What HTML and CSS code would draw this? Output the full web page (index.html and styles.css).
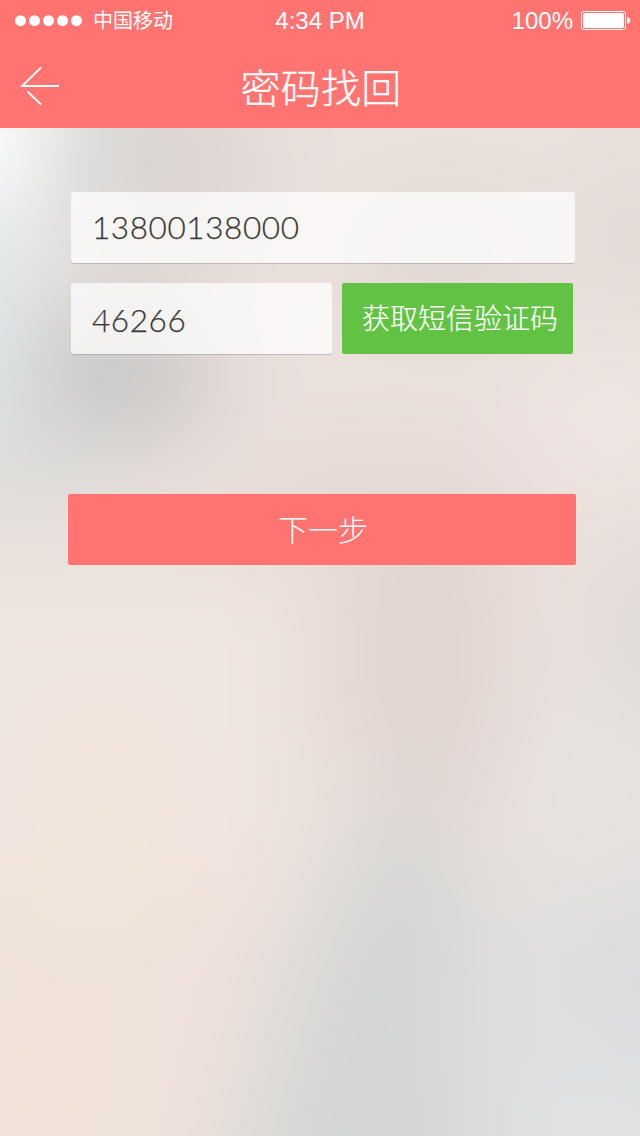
FILE: index.html
```html
<!DOCTYPE html>
<html lang="zh-CN">
<head>
<meta charset="utf-8">
<title>密码找回</title>
<link rel="stylesheet" href="styles.css">
</head>
<body>
<div class="screen">
  <svg class="backdrop" width="640" height="1136" viewBox="0 0 640 1136">
    <defs><filter id="soft" filterUnits="userSpaceOnUse" x="-200" y="-100" width="1040" height="1440" color-interpolation-filters="sRGB"><feGaussianBlur stdDeviation="46"/></filter></defs>
    <g filter="url(#soft)">
      <rect x="-200" y="-100" width="1040" height="1440" fill="#eae0dc"/>
      <rect x="-200" y="580" width="490" height="300" fill="#f0e6e0"/>
      <path d="M-200 860H260L150 1340H-200Z" fill="#efe2dc"/>
      <ellipse cx="130" cy="150" rx="80" ry="110" fill="#d8d8d6"/>
      <ellipse cx="200" cy="170" rx="60" ry="90" fill="#ddd4d1"/>
      <ellipse cx="115" cy="375" rx="100" ry="75" fill="#cac8c7"/>
      <ellipse cx="30" cy="460" rx="90" ry="50" fill="#dbdcd9"/>
      <rect x="-200" y="-100" width="245" height="320" fill="#fff"/>
      <rect x="-200" y="190" width="225" height="220" fill="#e0eaee"/>
      <ellipse cx="445" cy="255" rx="90" ry="42" fill="#dcd4d0"/>
      <ellipse cx="640" cy="235" rx="60" ry="50" fill="#e0d8d5"/>
      <ellipse cx="610" cy="420" rx="80" ry="60" fill="#f0e6e3"/>
      <ellipse cx="370" cy="500" rx="150" ry="40" fill="#e4d7d3"/>
      <ellipse cx="425" cy="660" rx="85" ry="170" fill="#e0d5d1"/>
      <ellipse cx="660" cy="640" rx="35" ry="80" fill="#d6d4d6"/>
      <ellipse cx="105" cy="770" rx="50" ry="45" fill="#f4e5d9"/>
      <ellipse cx="90" cy="900" rx="90" ry="60" fill="#f1e4da"/>
      <ellipse cx="50" cy="1080" rx="60" ry="90" fill="#f0e2d8"/>
      <path d="M400 800C480 830 500 1000 490 1340H200C260 1120 310 870 400 800Z" fill="#d4d6d4"/>
      <path d="M460 960L560 870H840V1340H480Z" fill="#dfdfdf"/>
      <ellipse cx="585" cy="780" rx="50" ry="105" fill="#e8e5e2"/>
      <ellipse cx="660" cy="980" rx="35" ry="80" fill="#d9d8dd"/>
      <ellipse cx="600" cy="1130" rx="70" ry="50" fill="#e1e3e5"/>
    </g>
  </svg>
  <header class="header">
    <div class="status">
      <div class="carrier">
        <svg class="signal" width="68" height="12" viewBox="0 0 68 12" fill="#fff"><circle cx="5.5" cy="5.7" r="5.5"/><circle cx="19.5" cy="5.7" r="5.5"/><circle cx="33.5" cy="5.7" r="5.5"/><circle cx="47.5" cy="5.7" r="5.5"/><circle cx="61.5" cy="5.7" r="5.5"/></svg>
        <span class="carrier-name">中国移动</span>
      </div>
      <div class="time">4:34 PM</div>
      <div class="power">
        <span>100%</span>
        <svg width="50" height="20" viewBox="0 0 50 20"><rect x=".5" y=".5" width="44" height="18" rx="2.5" fill="none" stroke="#fff"/><rect x="2" y="2" width="41" height="15" rx="2" fill="#fff"/><path d="M46 6.2H47C50 7 50 12 47 12.8H46Z" fill="#fff"/></svg>
      </div>
    </div>
    <nav class="nav">
      <svg class="back" width="40" height="40" viewBox="0 0 40 40" fill="none" stroke="#fff" stroke-width="1.8"><path d="M39 20H2L21 1.5M7.5 25.5L21 38.5"/></svg>
      <h1 class="title">密码找回</h1>
    </nav>
  </header>
  <main class="form">
    <div class="field phone">13800138000</div>
    <div class="row">
      <div class="field code">46266</div>
      <button class="send">获取短信验证码</button>
    </div>
    <button class="next">下一步</button>
  </main>
</div>
</body>
</html>
```
FILE: styles.css
```css
* { box-sizing: border-box; }
body { margin: 0; }
.screen {
  position: relative;
  width: 640px;
  height: 1136px;
  overflow: hidden;
  isolation: isolate;
  font-family: "Liberation Sans", "Noto Sans CJK SC", sans-serif;
  color: #fff;
  background: #eae0dc;
}
.backdrop { position: absolute; inset: 0; z-index: -1; }
.header { height: 128px; background: #ff7371; }
.status {
  display: grid;
  grid-template-columns: 1fr auto 1fr;
  height: 41px;
  padding: 0 9px 0 15px;
  align-items: center;
  font-size: 24px;
  line-height: 40px;
}
.carrier { display: flex; align-items: center; gap: 10px; }
.carrier-name { font-size: 20px; line-height: 40px; }
.time { transform: translateX(-3px); }
.power { display: flex; align-items: center; justify-content: flex-end; gap: 8px; }
.nav {
  display: grid;
  grid-template-columns: 40px 1fr 40px;
  height: 87px;
  padding: 0 20px;
  align-items: start;
}
.back { margin-top: 25px; }
.title {
  margin: 16px 0 0 2px;
  text-align: center;
  font-size: 40px;
  line-height: 58px;
  font-weight: 300;
  -webkit-text-stroke: .3px #fff;
  letter-spacing: .3px;
  font-family: "Noto Sans CJK SC", sans-serif;
}
.form { padding: 64px 64px 0 68px; }
.field {
  height: 71px;
  border-radius: 3px;
  background: rgba(255,255,255,.72);
  box-shadow: 0 1px 0 rgba(120,105,100,.3);
  padding-left: 21px;
  color: #3c3a39;
  -webkit-text-stroke: .25px #3c3a39;
  font: 300 31.5px/70px Lato, sans-serif;
  letter-spacing: .6px;
}
.phone { width: 504px; margin-left: 3px; }
.row { display: flex; gap: 10px; margin: 20px 0 0 3px; }
.code { width: 261px; line-height: 75px; }
.send, .next {
  border: 0;
  border-radius: 2px;
  height: 71px;
  padding: 0;
  color: #fff;
  font-family: "Noto Sans CJK SC", sans-serif;
  font-weight: 300;
}
.send { width: 231px; background: #61c243; font-size: 28px; padding: 0 0 3px 5px; -webkit-text-stroke: .2px #fff; }
.next { display: block; width: 508px; margin-top: 140px; background: #ff7371; font-size: 30px; padding: 0 0 4px 2px; }
```
